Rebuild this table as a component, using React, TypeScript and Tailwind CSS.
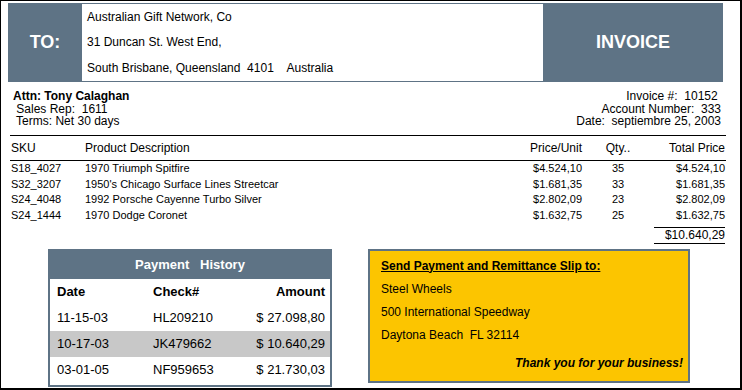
const items = [
  { sku: "S18_4027", desc: "1970 Triumph Spitfire", price: "$4.524,10", qty: 35, total: "$4.524,10" },
  { sku: "S32_3207", desc: "1950's Chicago Surface Lines Streetcar", price: "$1.681,35", qty: 33, total: "$1.681,35" },
  { sku: "S24_4048", desc: "1992 Porsche Cayenne Turbo Silver", price: "$2.802,09", qty: 23, total: "$2.802,09" },
  { sku: "S24_1444", desc: "1970 Dodge Coronet", price: "$1.632,75", qty: 25, total: "$1.632,75" },
];

const payments = [
  { date: "11-15-03", check: "HL209210", amount: "$ 27.098,80" },
  { date: "10-17-03", check: "JK479662", amount: "$ 10.640,29" },
  { date: "03-01-05", check: "NF959653", amount: "$ 21.730,03" },
];

export default function App() {
  return (
    <div className="h-[390px] w-[742px] border-t border-l border-r-2 border-b-2 border-black bg-white pl-[7px] pt-[2px] font-['Liberation_Sans',Arial,sans-serif] text-black">
      {/* Header */}
      <div className="flex h-[79px] w-[715px]">
        <div className="flex w-[74px] items-center justify-center bg-[#5e7385] text-[18px] font-bold text-white">
          TO:
        </div>
        <div className="flex flex-1 flex-col border-y border-[#5e7385] pt-[0.5px] pl-[5px] text-[12px] leading-[25.5px] whitespace-pre">
          <div>Australian Gift Network, Co</div>
          <div>31 Duncan St. West End,</div>
          <div>South Brisbane, Queensland  4101    Australia</div>
        </div>
        <div className="flex w-[180px] items-center justify-center bg-[#5e7385] text-[18px] font-bold text-white">
          INVOICE
        </div>
      </div>

      {/* Customer / invoice info */}
      <div className="mt-[8px] flex w-[713px] justify-between text-[12px] leading-[12.5px] whitespace-pre">
        <div className="ml-[5px]">
          <div className="font-bold">Attn: Tony Calaghan</div>
          <div> Sales Rep:  1611</div>
          <div> Terms: Net 30 days</div>
        </div>
        <div className="text-right">
          <div>Invoice #:  10152 </div>
          <div>Account Number:  333</div>
          <div>Date:  septiembre 25, 2003</div>
        </div>
      </div>

      {/* Line items */}
      <div className="mt-[7px] ml-[2px] w-[716px] text-[11px]">
        <div className="grid h-[26px] grid-cols-[74px_416px_82px_72px_71px] items-center border-y border-black text-[12px]">
          <div className="pl-[1px]">SKU</div>
          <div className="pl-[1px]">Product Description</div>
          <div className="text-right">Price/Unit</div>
          <div className="text-center">Qty..</div>
          <div className="text-right">Total Price</div>
        </div>
        <div className="pt-[0.5px]">
          {items.map((it) => (
            <div key={it.sku} className="grid h-[15.5px] grid-cols-[74px_416px_82px_72px_71px] items-center leading-[15.5px]">
              <div className="pl-[1px]">{it.sku}</div>
              <div className="pl-[1px]">{it.desc}</div>
              <div className="text-right">{it.price}</div>
              <div className="text-center">{it.qty}</div>
              <div className="text-right">{it.total}</div>
            </div>
          ))}
        </div>
        <div className="mt-[3.5px] ml-[644px] flex h-[17px] w-[71px] items-center justify-end border-y border-black text-[12px]">
          $10.640,29
        </div>
      </div>

      {/* Bottom section */}
      <div className="mt-[5px] ml-[40px] flex items-start gap-[36px]">
        <div className="w-[284px] border-2 border-[#5e7385] pb-[2px]">
          <div className="flex h-[28px] items-center justify-center bg-[#5e7385] text-[13px] font-bold whitespace-pre text-white">
            Payment   History
          </div>
          <div className="grid h-[26px] grid-cols-[96px_1fr_auto] items-center pl-[7px] pr-[5px] text-[13px] font-bold">
            <div>Date</div>
            <div>Check#</div>
            <div className="text-right">Amount</div>
          </div>
          {payments.map((p, i) => (
            <div
              key={p.check}
              className={
                i === 1
                  ? "grid h-[26px] grid-cols-[96px_1fr_auto] items-center bg-[#c8c8c8] pl-[7px] pr-[5px] text-[13px]"
                  : "grid h-[26px] grid-cols-[96px_1fr_auto] items-center pl-[7px] pr-[5px] text-[13px]"
              }
            >
              <div>{p.date}</div>
              <div>{p.check}</div>
              <div className="text-right">{p.amount}</div>
            </div>
          ))}
        </div>

        <div className="h-[134px] w-[322px] border-2 border-[#5e7385] bg-[#fcc500] pt-[4px] pl-[11px] pr-[5px] text-[12px] leading-[23px]">
          <div className="font-bold underline">Send Payment and Remittance Slip to:</div>
          <div>Steel Wheels</div>
          <div>500 International Speedway</div>
          <div className="whitespace-pre">Daytona Beach  FL 32114</div>
          <div className="mt-[5px] text-right font-bold italic">Thank you for your business!</div>
        </div>
      </div>
    </div>
  );
}
